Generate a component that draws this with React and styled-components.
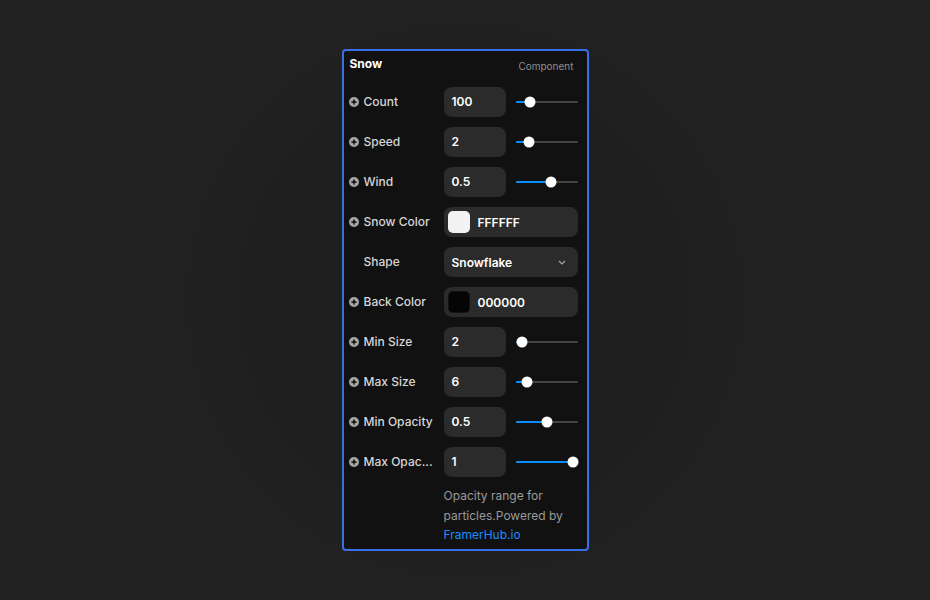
import React from "react"
import styled, { createGlobalStyle } from "styled-components"

const GlobalStyle = createGlobalStyle`
  html, body {
    margin: 0;
    padding: 0;
    background: #212121;
  }
  body {
    font-family: Inter, "Liberation Sans", sans-serif;
    -webkit-font-smoothing: antialiased;
  }
`

const Page = styled.div`
  width: 930px;
  height: 600px;
  display: flex;
  justify-content: center;
  align-items: flex-start;
  padding-top: 49px;
  box-sizing: border-box;
  background: radial-gradient(
    circle at 465px 300px,
    #1f1f1f 0px,
    #1f1f1f 228px,
    #202020 228px,
    #202020 275px,
    #212121 275px,
    #212121 349px,
    #222222 349px,
    #222222 391px,
    #222222 391px
  );
`

const Panel = styled.div`
  width: 247px;
  box-sizing: border-box;
  border: 2px solid #3b6fe6;
  border-radius: 4px;
  background: #111111;
  padding: 0 9px 4px 5px;
  display: flex;
  flex-direction: column;
`

const Header = styled.div`
  height: 26px;
  display: flex;
  align-items: center;
  justify-content: space-between;
  margin-bottom: 10px;
`

const Title = styled.span`
  color: #ffffff;
  font-size: 12px;
  font-weight: 700;
  padding-left: 1px;
  margin-bottom: 1px;
`

const Kind = styled.span`
  color: #8f8f8f;
  font-size: 10px;
  margin-top: 3px;
  margin-right: 4px;
`

const Rows = styled.div`
  display: flex;
  flex-direction: column;
  gap: 10px;
`

const Row = styled.div`
  display: grid;
  grid-template-columns: 95px 1fr;
  align-items: center;
  height: 30px;
`

const Label = styled.div`
  display: flex;
  align-items: center;
  gap: 5px;
  padding-left: ${p => (p.$plain ? "15px" : "0")};
  padding-bottom: 1px;
  color: #d6d6d6;
  font-size: 12px;
  font-weight: 500;
  white-space: nowrap;
`

const Control = styled.div`
  display: flex;
  align-items: center;
  gap: 10px;
`

const Input = styled.div`
  width: 62px;
  height: 30px;
  box-sizing: border-box;
  border-radius: 8px;
  background: #2b2b2b;
  color: #ffffff;
  font-size: 12px;
  font-weight: 600;
  display: flex;
  align-items: center;
  padding: 0 0 1px 8px;
`

const Wide = styled.div`
  flex: 1;
  height: 30px;
  box-sizing: border-box;
  border-radius: 8px;
  background: #2b2b2b;
  color: #ffffff;
  font-size: 12px;
  font-weight: 600;
  display: flex;
  align-items: center;
  gap: 8px;
  padding: 0 12px 0 ${p => (p.$swatch ? "4px" : "8px")};
`

const Swatch = styled.div`
  width: 22px;
  height: 22px;
  border-radius: 5px;
  background: ${p => p.$color};
  box-shadow: inset 0 0 0 1px rgba(255, 255, 255, 0.06);
`

const Chevron = styled.svg`
  margin-left: auto;
`

const Track = styled.div`
  position: relative;
  width: 62px;
  height: 2px;
  border-radius: 1px;
  background: #434343;
`

const Fill = styled.div`
  position: absolute;
  left: 0;
  top: 0;
  height: 2px;
  border-radius: 1px;
  background: #0a8cff;
`

const Thumb = styled.div`
  position: absolute;
  top: 50%;
  width: 11px;
  height: 11px;
  border-radius: 50%;
  background: #ffffff;
  transform: translate(-50%, -50%);
`

const Note = styled.p`
  margin: 9px 0 0 95px;
  color: #9a9a9a;
  font-size: 12px;
  line-height: 19.5px;
`

const Link = styled.a`
  color: #1a8cff;
  text-decoration: none;
`

const Plus = () => (
  <svg width="10" height="10" viewBox="0 0 10 10">
    <circle cx="5" cy="5" r="5" fill="#a6a6a6" />
    <path d="M5 2.4v5.2M2.4 5h5.2" stroke="#111" strokeWidth="1.5" />
  </svg>
)

const Slider = ({ value }) => {
  const center = 6 + (50 * value) / 100
  return (
    <Track>
      <Fill style={{ width: center }} />
      <Thumb style={{ left: center }} />
    </Track>
  )
}

const numbers = [
  { label: "Count", value: "100", pos: 16 },
  { label: "Speed", value: "2", pos: 14 },
  { label: "Wind", value: "0.5", pos: 58 },
]

const sizes = [
  { label: "Min Size", value: "2", pos: 1 },
  { label: "Max Size", value: "6", pos: 10 },
  { label: "Min Opacity", value: "0.5", pos: 50 },
  { label: "Max Opac...", value: "1", pos: 102 },
]

const NumberRow = ({ label, value, pos }) => (
  <Row>
    <Label>
      <Plus />
      {label}
    </Label>
    <Control>
      <Input>{value}</Input>
      <Slider value={pos} />
    </Control>
  </Row>
)

const ColorRow = ({ label, color, hex }) => (
  <Row>
    <Label>
      <Plus />
      {label}
    </Label>
    <Control>
      <Wide $swatch>
        <Swatch $color={color} />
        {hex}
      </Wide>
    </Control>
  </Row>
)

const App = () => (
  <>
    <GlobalStyle />
    <Page>
      <Panel>
        <Header>
          <Title>Snow</Title>
          <Kind>Component</Kind>
        </Header>
        <Rows>
          {numbers.map(n => (
            <NumberRow key={n.label} {...n} />
          ))}
          <ColorRow label="Snow Color" color="#f2f2f2" hex="FFFFFF" />
          <Row>
            <Label $plain>Shape</Label>
            <Control>
              <Wide>
                Snowflake
                <Chevron width="8" height="5" viewBox="0 0 8 5">
                  <path d="M1 1l3 3 3-3" fill="none" stroke="#aaa" strokeWidth="1.2" />
                </Chevron>
              </Wide>
            </Control>
          </Row>
          <ColorRow label="Back Color" color="#050505" hex="000000" />
          {sizes.map(n => (
            <NumberRow key={n.label} {...n} />
          ))}
        </Rows>
        <Note>
          Opacity range for particles.Powered by{" "}
          <Link href="#">FramerHub.io</Link>
        </Note>
      </Panel>
    </Page>
  </>
)

export default App
